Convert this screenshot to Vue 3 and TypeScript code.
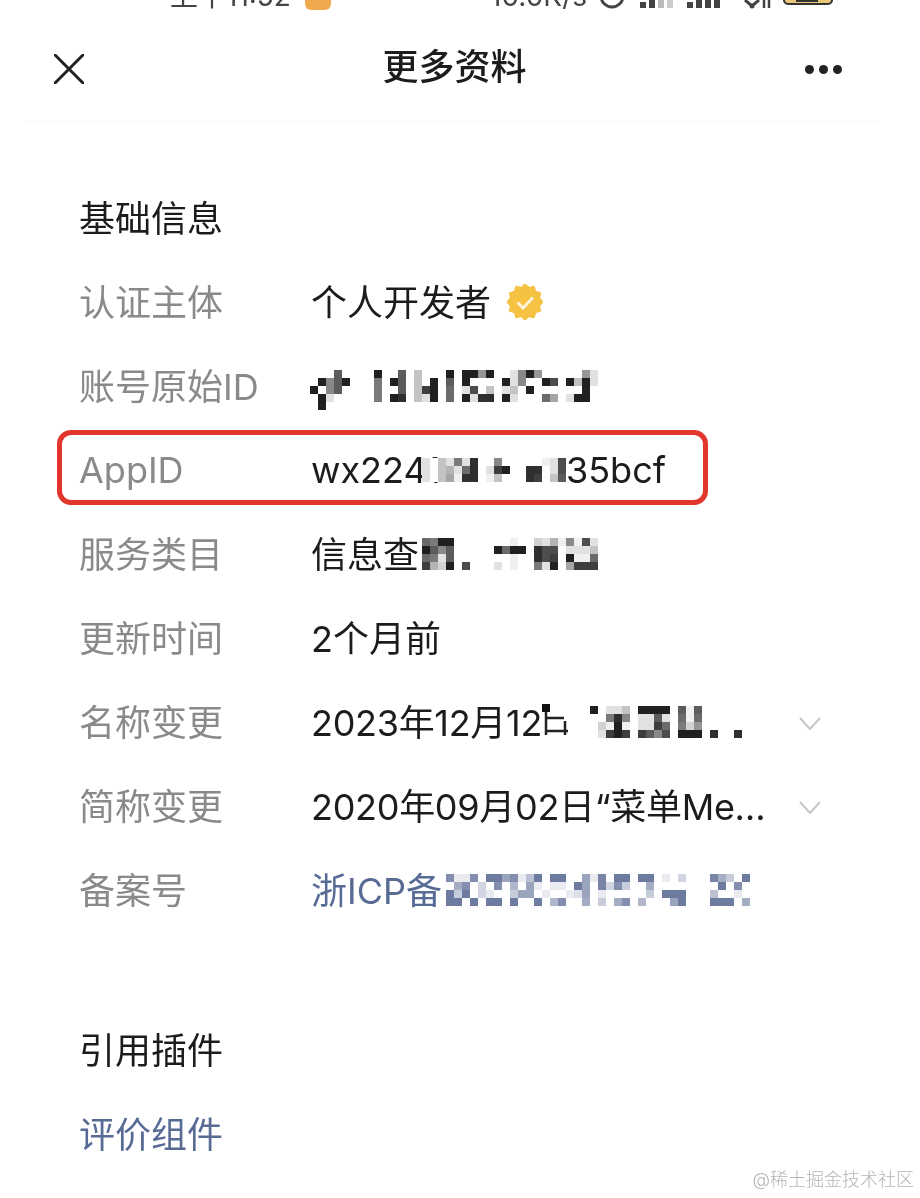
<script setup lang="ts">
type Mosaic = { width: number; height: number; cells: { x: number; y: number; o: number }[] }

const CELL = 8

// one hex digit per cell: 0 is solid, f is nearly white, a dot is empty
function mosaic(rows: string[]): Mosaic {
  const cells: Mosaic['cells'] = []
  rows.forEach((row, r) => {
    row.split('').forEach((ch, c) => {
      if (ch !== '.') cells.push({ x: c * CELL, y: r * CELL, o: 1 - parseInt(ch, 16) / 16 })
    })
  })
  const cols = Math.max(...rows.map((row) => row.length))
  return { width: cols * CELL, height: rows.length * CELL, cells }
}

const originalId = mosaic([
  '...5....1..5.c...1.1191..e819.....9e',
  '.1851...7.15.c.1.5.1....1e8..14.1c1e',
  '1.85....7..5.c31.6.e4.c.ec.1......1.',
  '.1e.....7.12.ce1.6.1e22.1e...6a.e11.',
  '.1',
])
const appId = mosaic([
  'e.ce7e2..8.....fe4',
  'e.cbe62.e31..22.e4',
  'e.caf22.fc...23.c5',
])
const category = mosaic([
  '6711.......f..debf8f4e',
  '1585.....1611.244.eeec',
  '67e5.......f..243.1ff6',
  '3bd1.4...e.f..7e1.a333',
])
const rename = mosaic([
  '1.eec.1111.5f5',
  '..728.ee5e.6f6',
  '.df1f.ee36.7d9',
  '.e313.3584.111.2..2',
])
const icp = mosaic([
  '5ee5.3375ea3.33..7e4.33.33.e.c...48b.3',
  '.85.c.5.9.7e.ee.37.4c5b..8........3.5.',
  '3b3.ce..b77.e..ed7.e.....b.333...a..e.',
  '33.3.33.3..3.95..8.b.85.9...73...333.8',
])

// scalloped edge of the verified badge
const badgePoints = Array.from({ length: 24 }, (_, i) => {
  const r = i % 2 === 0 ? 17.5 : 14.5
  const a = (i * Math.PI) / 12
  return `${(18 + r * Math.sin(a)).toFixed(2)},${(18 - r * Math.cos(a)).toFixed(2)}`
}).join(' ')

const signalBars = [
  { x: 0, h: 6, c: '#444' },
  { x: 9, h: 9, c: '#444' },
  { x: 18, h: 12, c: '#bbb' },
  { x: 27, h: 12, c: '#ccc' },
  { x: 47, h: 6, c: '#444' },
  { x: 56, h: 9, c: '#444' },
  { x: 65, h: 12, c: '#444' },
  { x: 74, h: 12, c: '#444' },
]
</script>

<template>
  <div class="page">
    <div class="status">
      <span class="clock">上午11:52</span>
      <span class="notice"></span>
      <span class="speed">10.0K/s</span>
      <svg class="status-icons" width="240" height="10" viewBox="0 0 240 10">
        <circle cx="12" cy="-4" r="11" fill="none" stroke="#444" stroke-width="3" />
        <rect v-for="b in signalBars" :key="b.x" :x="b.x + 40" :y="8 - b.h" width="6" :height="b.h" :fill="b.c" />
        <path d="M145 0l7 6 7-6" fill="none" stroke="#444" stroke-width="3" />
        <circle cx="152" cy="6" r="2.5" fill="#444" />
        <path d="M164 0v8M169 0v8" stroke="#444" stroke-width="2.5" />
        <rect x="184" y="-6" width="48" height="10" rx="4" fill="#e8c678" stroke="#333" stroke-width="2" />
        <rect x="196" y="-4" width="22" height="6" fill="#333" />
      </svg>
    </div>

    <header class="nav">
      <svg class="close" width="30" height="30" viewBox="0 0 30 30">
        <path d="M1 1l28 28M29 1L1 29" fill="none" stroke="#222" stroke-width="3" stroke-linecap="round" />
      </svg>
      <h1 class="title">更多资料</h1>
      <div class="more">
        <i></i><i></i><i></i>
      </div>
    </header>

    <section class="info">
      <h2 class="heading">基础信息</h2>

      <div class="row">
        <span class="label">认证主体</span>
        <span class="value">个人开发者</span>
        <svg class="badge" width="36" height="36" viewBox="0 0 36 36">
          <polygon :points="badgePoints" fill="#f5c242" stroke="#f5c242" stroke-width="2" stroke-linejoin="round" />
          <path d="M10.5 18.5l5.5 5.5 10-10.5" fill="none" stroke="#fdf3d8" stroke-width="3" />
        </svg>
      </div>

      <div class="row">
        <span class="label">账号原始ID</span>
        <svg class="mosaic id-mosaic" :width="originalId.width" :height="originalId.height">
          <rect v-for="(c, i) in originalId.cells" :key="i" :x="c.x" :y="c.y" :width="CELL" :height="CELL" :opacity="c.o" fill="#111" />
        </svg>
      </div>

      <div class="row app-row">
        <span class="label">AppID</span>
        <span class="value app-head">wx2241</span>
        <svg class="mosaic app-mosaic" :width="appId.width" :height="appId.height">
          <rect v-for="(c, i) in appId.cells" :key="i" :x="c.x" :y="c.y" :width="CELL" :height="CELL" :opacity="c.o" fill="#111" />
        </svg>
        <span class="value">35bcf</span>
        <span class="highlight"></span>
      </div>

      <div class="row">
        <span class="label">服务类目</span>
        <span class="value category-head">信息查</span>
        <svg class="mosaic" :width="category.width" :height="category.height">
          <rect v-for="(c, i) in category.cells" :key="i" :x="c.x" :y="c.y" :width="CELL" :height="CELL" :opacity="c.o" fill="#111" />
        </svg>
      </div>

      <div class="row">
        <span class="label">更新时间</span>
        <span class="value">2个月前</span>
      </div>

      <div class="row">
        <span class="label">名称变更</span>
        <span class="value dates rename-head">2023年12月12</span>
        <svg class="cut-glyph" width="26" height="32" viewBox="0 0 26 32">
          <path d="M0 0h8v8H0z" fill="#111" />
          <path d="M4 8v23M5 14h17M5 27h21M23 17v14" fill="none" stroke="#222" stroke-width="2.5" />
        </svg>
        <svg class="mosaic rename-mosaic" :width="rename.width" :height="rename.height">
          <rect v-for="(c, i) in rename.cells" :key="i" :x="c.x" :y="c.y" :width="CELL" :height="CELL" :opacity="c.o" fill="#111" />
        </svg>
        <svg class="chevron" width="22" height="14" viewBox="0 0 22 14">
          <path d="M1 1l10 11L21 1" fill="none" stroke="#c6c6c6" stroke-width="2" />
        </svg>
      </div>

      <div class="row">
        <span class="label">简称变更</span>
        <span class="value dates">2020年09月02日“菜单Me…</span>
        <svg class="chevron" width="22" height="14" viewBox="0 0 22 14">
          <path d="M1 1l10 11L21 1" fill="none" stroke="#c6c6c6" stroke-width="2" />
        </svg>
      </div>

      <div class="row">
        <span class="label">备案号</span>
        <span class="value link icp-head">浙ICP备</span>
        <svg class="mosaic" :width="icp.width" :height="icp.height">
          <rect v-for="(c, i) in icp.cells" :key="i" :x="c.x" :y="c.y" :width="CELL" :height="CELL" :opacity="c.o" fill="#4c5c8a" />
        </svg>
      </div>
    </section>

    <section class="plugins">
      <h2 class="heading">引用插件</h2>
      <div class="row">
        <span class="value link">评价组件</span>
      </div>
    </section>

    <span class="watermark">@稀土掘金技术社区</span>
  </div>
</template>

<style scoped>
.page {
  position: relative;
  box-sizing: border-box;
  width: 920px;
  height: 1198px;
  overflow: hidden;
  background: #fff;
  color: #1c1c1c;
  font-family: Inter, "Noto Sans CJK SC", sans-serif;
  font-size: 36px;
  filter: blur(0.35px);
}

.status {
  display: flex;
  align-items: flex-end;
  box-sizing: border-box;
  height: 17px;
  padding: 0 0 7px 170px;
  overflow: hidden;
  color: #444;
  font-size: 28px;
  line-height: 28px;
}

.clock {
  flex: none;
  width: 135px;
}

.notice {
  flex: none;
  width: 26px;
  height: 28px;
  border-radius: 6px;
  background: #f0aa4e;
}

.speed {
  flex: none;
  width: 110px;
  margin-left: 159px;
}

.status-icons {
  flex: none;
  overflow: hidden;
}

.nav {
  display: flex;
  align-items: center;
  justify-content: space-between;
  box-sizing: border-box;
  height: 105px;
  margin: 0 40px 0 24px;
  padding: 0 38px 0 30px;
  border-bottom: 1px solid #f8f8f8;
}

.close {
  flex: none;
  margin-top: -1px;
}

.title {
  margin: -4px 0 0 20px;
  font-size: 36px;
  font-weight: 500;
  line-height: 50px;
}

.more {
  display: flex;
  gap: 5px;
}

.more i {
  width: 9px;
  height: 9px;
  border-radius: 50%;
  background: #222;
}

.info {
  margin-top: 54px;
  padding-left: 79px;
}

.plugins {
  margin-top: 76px;
  padding-left: 79px;
}

.heading {
  display: flex;
  align-items: center;
  box-sizing: border-box;
  height: 84px;
  margin: 0;
  padding-bottom: 4px;
  font-size: 36px;
  font-weight: 400;
}

.row {
  position: relative;
  display: flex;
  align-items: center;
  height: 84px;
}

.label {
  flex: none;
  width: 232px;
  margin-bottom: 4px;
  color: #8a8a8a;
}

.value {
  flex: none;
  margin-bottom: 4px;
  white-space: nowrap;
}

.app-row .label,
.app-row .value {
  margin-bottom: 0;
}

.dates {
  letter-spacing: -0.3px;
}

.link {
  color: #576b95;
}

.app-head {
  width: 111px;
}

.category-head {
  width: 111px;
}

.rename-head {
  width: 231px;
}

.icp-head {
  width: 135px;
}

.badge {
  flex: none;
  margin-left: 16px;
}

.mosaic {
  flex: none;
}

.id-mosaic {
  margin-top: 8px;
  margin-left: -1px;
}

.app-mosaic {
  position: relative;
  background: #fff;
}

.rename-mosaic {
  margin-left: 22px;
}

.cut-glyph {
  flex: none;
  margin-top: -5px;
}

.chevron {
  position: absolute;
  left: 720px;
  top: 37px;
}

.highlight {
  position: absolute;
  left: -22px;
  top: 2px;
  box-sizing: border-box;
  width: 651px;
  height: 75px;
  border: 5px solid #e2352b;
  border-radius: 14px;
}

.watermark {
  position: absolute;
  right: 6px;
  bottom: 5px;
  color: #b4b4b4;
  font-size: 18px;
  font-weight: 300;
  line-height: 26px;
}
</style>
